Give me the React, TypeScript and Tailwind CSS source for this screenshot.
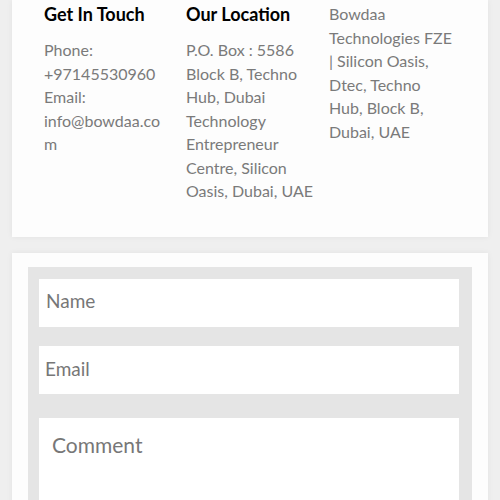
import React from "react";

export default function App() {
  return (
    <div className="min-h-[500px] w-[500px] bg-[#efefef] pb-10" style={{ fontFamily: "Lato, 'Open Sans', sans-serif" }}>
      <div className="mx-3 bg-[#fdfdfd] pl-8 pr-[17px] pt-[2px] pb-[34px] shadow-[0_0_6px_rgba(0,0,0,0.06)]">
        <div className="flex">
          <div className="w-[142px] shrink-0 pr-[20px]">
            <h3 className="whitespace-nowrap text-[18px] font-bold leading-6 text-black">Get In Touch</h3>
            <p className="mt-3 text-[16px] leading-[23.5px] text-[#7a7a7a] break-all">
              Phone:<br />+97145530960<br />Email:<br />info@bowdaa.com
            </p>
          </div>
          <div className="w-[143px] shrink-0 pr-[12px]">
            <h3 className="whitespace-nowrap text-[18px] font-bold leading-6 text-black">Our Location</h3>
            <p className="mt-3 text-[16px] leading-[23.5px] text-[#7a7a7a]">
              P.O. Box : 5586 Block B, Techno Hub, Dubai Technology Entrepreneur Centre, Silicon Oasis, Dubai, UAE
            </p>
          </div>
          <div className="w-[124px] shrink-0">
            <p className="text-[16px] leading-[23.5px] text-[#7a7a7a]">
              Bowdaa Technologies FZE | Silicon Oasis, Dtec, Techno Hub, Block B, Dubai, UAE
            </p>
          </div>
        </div>
      </div>
      <div className="mx-3 mt-4 bg-[#fdfdfd] px-4 pt-[14px] pb-6 shadow-[0_0_6px_rgba(0,0,0,0.06)]">
        <div className="flex flex-col bg-[#e5e5e5] pl-[11px] pr-[13px] pt-3 pb-3">
          <input
            placeholder="Name"
            className="h-12 w-full bg-white px-[7px] pb-[5px] text-[19px] text-[#666] placeholder:text-[#777] outline-none"
          />
          <input
            placeholder="Email"
            className="mt-[19px] h-12 w-full bg-white px-[6px] pb-[3px] text-[19px] text-[#666] placeholder:text-[#777] outline-none"
          />
          <textarea
            placeholder="Comment"
            className="mt-6 h-[140px] w-full resize-none bg-white px-[13px] pt-[11px] text-[21px] text-[#666] placeholder:text-[#777] outline-none"
          />
        </div>
      </div>
    </div>
  );
}
